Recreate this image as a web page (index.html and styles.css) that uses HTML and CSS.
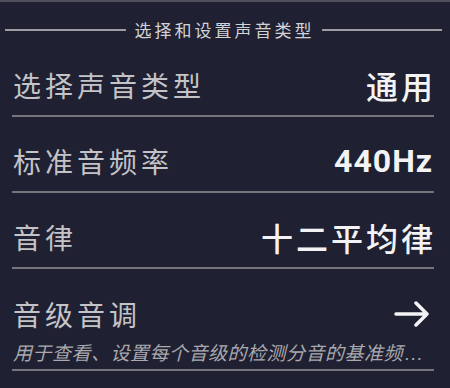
FILE: index.html
```html
<!DOCTYPE html>
<html lang="zh-CN">
<head>
<meta charset="utf-8">
<title>选择和设置声音类型</title>
<link rel="stylesheet" href="styles.css">
</head>
<body>
<div class="panel">
  <div class="section-head">
    <span class="rule"></span>
    <span class="section-title">选择和设置声音类型</span>
    <span class="rule"></span>
  </div>
  <div class="row">
    <span class="label">选择声音类型</span>
    <span class="value">通用</span>
  </div>
  <div class="row">
    <span class="label">标准音频率</span>
    <span class="value latin">440Hz</span>
  </div>
  <div class="row">
    <span class="label">音律</span>
    <span class="value">十二平均律</span>
  </div>
  <div class="row row-link">
    <div class="row-main">
      <span class="label">音级音调</span>
      <svg class="arrow" width="36" height="26" viewBox="0 0 36 26" aria-hidden="true">
        <path d="M2 13 H33 M22 2 L33 13 L22 24" fill="none" stroke="#f4f4f6" stroke-width="3.5" stroke-linecap="round" stroke-linejoin="round"/>
      </svg>
    </div>
    <div class="sub">用于查看、设置每个音级的检测分音的基准频<span class="dots">...</span></div>
  </div>
</div>
</body>
</html>
```

FILE: styles.css
```css
html, body {
  margin: 0;
  padding: 0;
  background: #1f2031;
}
body {
  width: 450px;
  height: 388px;
  overflow: hidden;
  font-family: "Noto Sans CJK SC", "Noto Sans", sans-serif;
}
.panel {
  border-top: 2px solid #4e4f5a;
  height: 386px;
  background: #1f2031;
}
.section-head {
  display: flex;
  align-items: center;
  gap: 9px;
  margin: 0 8px 0 5px;
  padding: 18px 0 1px;
  height: 20px;
}
.rule {
  flex: 1;
  height: 2px;
  background: #9c9da3;
}
.section-title {
  font-size: 17px;
  line-height: 20px;
  letter-spacing: 3px;
  margin-right: -2px;
  color: #d2d2d6;
}
.row {
  margin: 0 16px 0 12px;
  padding: 26px 0 12px 1px;
  border-bottom: 2px solid #74757d;
  display: flex;
  align-items: center;
  justify-content: space-between;
  height: 36px;
}
.label {
  font-size: 28px;
  line-height: 36px;
  letter-spacing: 4px;
  color: #c3c3c8;
}
.value {
  font-size: 32px;
  line-height: 36px;
  letter-spacing: 3px;
  margin-right: -2px;
  font-weight: 500;
  color: #f3f3f5;
}
.value.latin {
  font-family: Roboto, "Liberation Sans", sans-serif;
  font-weight: 700;
  letter-spacing: 1px;
  margin-right: 1px;
}
.row-link {
  display: block;
  height: auto;
  padding: 27px 0 4px 1px;
}
.row-main {
  display: flex;
  align-items: center;
  justify-content: space-between;
  height: 36px;
}
.arrow {
  display: block;
  margin-right: 4px;
}
.sub {
  margin-top: 9px;
  font-size: 19px;
  line-height: 22px;
  letter-spacing: 0.5px;
  font-style: italic;
  color: #a9a9af;
  white-space: nowrap;
}
.dots {
  font-family: "Liberation Sans", sans-serif;
  letter-spacing: 1px;
  margin-left: 2px;
}
```
